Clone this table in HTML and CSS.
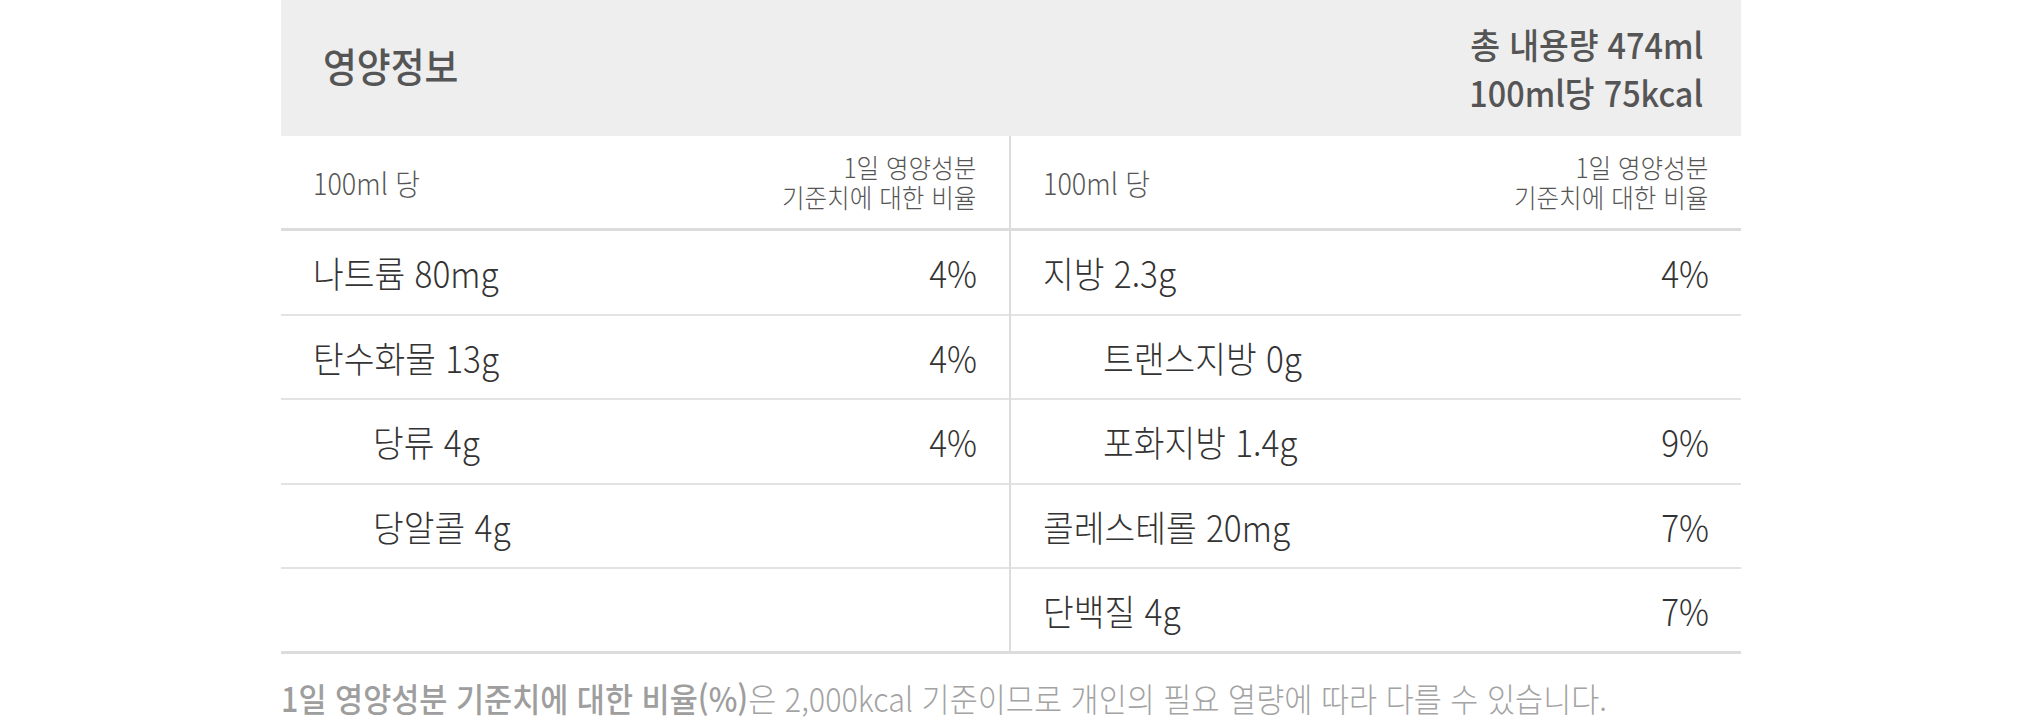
FILE: index.html
```html
<!DOCTYPE html>
<html lang="ko">
<head>
<meta charset="utf-8">
<title>영양정보</title>
<link rel="stylesheet" href="styles.css">
</head>
<body>
<div class="page">
  <section class="nutrition">
    <header class="nutri-head">
      <h2 class="nutri-title">영양정보</h2>
      <p class="nutri-total">총 내용량 474ml<br>100ml당 75kcal</p>
    </header>
    <div class="nutri-body">
      <div class="col col-left">
        <div class="row row-head"><span class="name per">100ml 당</span><span class="pct pct-label">1일 영양성분<br>기준치에 대한 비율</span></div>
        <div class="row"><span class="name">나트륨 80mg</span><span class="pct">4%</span></div>
        <div class="row"><span class="name">탄수화물 13g</span><span class="pct">4%</span></div>
        <div class="row sub"><span class="name">당류 4g</span><span class="pct">4%</span></div>
        <div class="row sub"><span class="name">당알콜 4g</span><span class="pct"></span></div>
        <div class="row"><span class="name"></span><span class="pct"></span></div>
      </div>
      <div class="col col-right">
        <div class="row row-head"><span class="name per">100ml 당</span><span class="pct pct-label">1일 영양성분<br>기준치에 대한 비율</span></div>
        <div class="row"><span class="name">지방 2.3g</span><span class="pct">4%</span></div>
        <div class="row sub"><span class="name">트랜스지방 0g</span><span class="pct"></span></div>
        <div class="row sub"><span class="name">포화지방 1.4g</span><span class="pct">9%</span></div>
        <div class="row"><span class="name">콜레스테롤 20mg</span><span class="pct">7%</span></div>
        <div class="row"><span class="name">단백질 4g</span><span class="pct">7%</span></div>
      </div>
    </div>
    <p class="note"><span class="note-text"><strong>1일 영양성분 기준치에 대한 비율(%)</strong>은 2,000kcal 기준이므로 개인의 필요 열량에 따라 다를 수 있습니다.</span></p>
  </section>
</div>
</body>
</html>
```

FILE: styles.css
```css
html, body {
  margin: 0;
  padding: 0;
  background: #ffffff;
  overflow: hidden;
}

.page {
  width: 2021px;
  font-family: "Noto Sans CJK KR", "Noto Sans", sans-serif;
  color: #333333;
}

.nutrition {
  width: 1460px;
  margin: 0 auto;
}

.nutri-head {
  display: flex;
  justify-content: space-between;
  align-items: center;
  height: 136px;
  box-sizing: border-box;
  padding: 0 37px 0 42px;
  background: #eeeeee;
  color: #555555;
}

.nutri-title {
  margin: 0 0 6px;
  font-size: 40px;
  font-weight: 500;
  line-height: 48px;
  transform: scaleX(0.92);
  transform-origin: left center;
  white-space: nowrap;
}

.nutri-total {
  margin: 0;
  font-size: 35.2px;
  font-weight: 500;
  line-height: 48px;
  text-align: right;
  transform: scaleX(0.92);
  transform-origin: right center;
  white-space: nowrap;
}

.nutri-body {
  display: grid;
  grid-template-columns: 1fr 1fr;
  border-bottom: 3px solid #dcdcdc;
}

.col-left {
  border-right: 2px solid #dcdcdc;
}

.row {
  display: flex;
  justify-content: space-between;
  align-items: center;
  height: 84.5px;
  box-sizing: border-box;
  padding: 0 32px;
  border-bottom: 2px solid #e3e3e3;
  font-size: 36.3px;
  font-weight: 300;
  color: #333333;
}

.row:last-child {
  height: 82px;
  border-bottom: none;
}

.row.sub {
  padding-left: 92px;
}

.name,
.pct {
  display: inline-block;
  white-space: nowrap;
  transform: scaleX(0.92);
}

.name {
  transform-origin: left center;
}

.pct {
  transform-origin: right center;
  text-align: right;
}

.row-head {
  height: 95px;
  border-bottom: 3px solid #dcdcdc;
  color: #555555;
}

.per {
  font-size: 29.3px;
}

.pct-label {
  font-size: 26.7px;
  line-height: 30px;
}

.note {
  margin: 21px 0 0;
  font-size: 33.2px;
  font-weight: 300;
  line-height: 46px;
  color: #a3a3a3;
  white-space: nowrap;
}

.note-text {
  display: inline-block;
  transform: scaleX(0.92);
  transform-origin: left center;
}

.note strong {
  font-weight: 500;
  color: #9e9e9e;
}
```
